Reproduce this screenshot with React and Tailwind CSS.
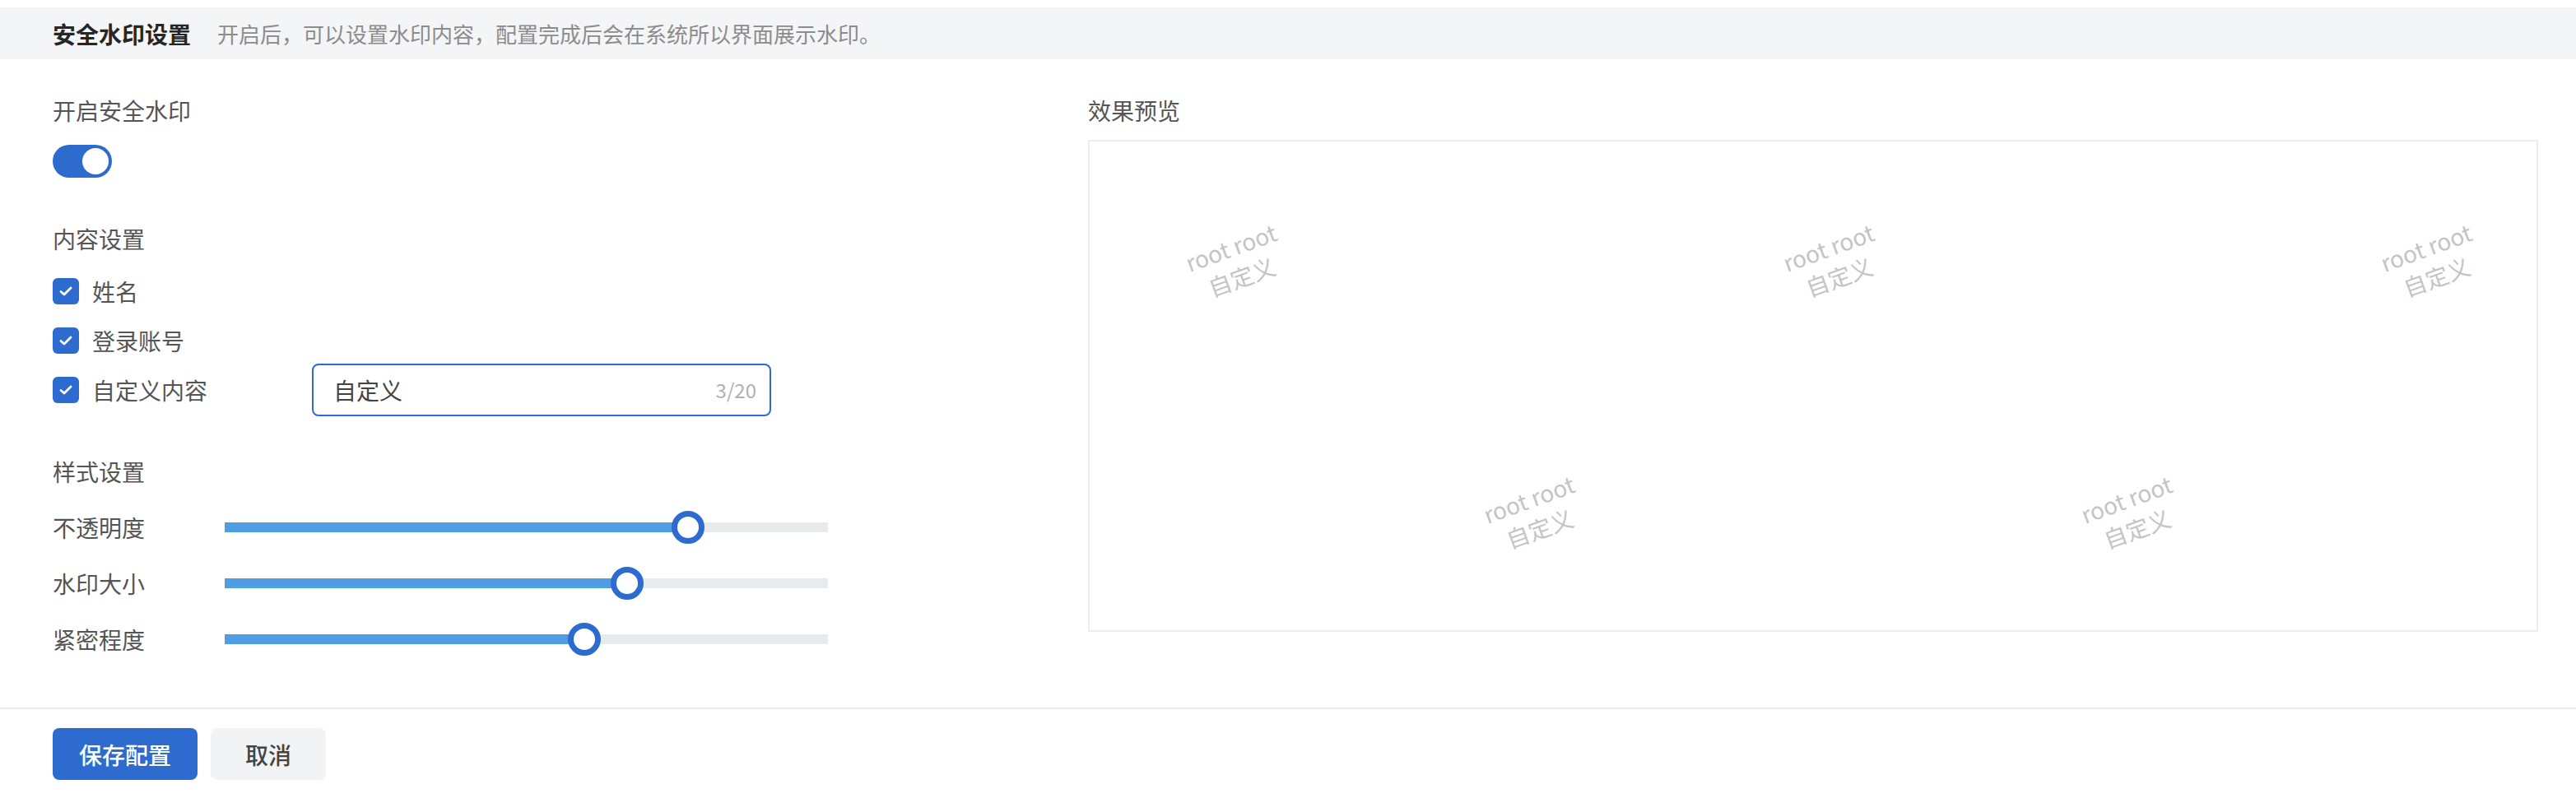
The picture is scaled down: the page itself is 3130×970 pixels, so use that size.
import { useState } from 'react';

const FONT = {
  fontFamily: '"PingFang SC", "Noto Sans CJK SC", "Noto Sans", sans-serif',
};

const sliders = [
  { label: '不透明度', fill: 563 },
  { label: '水印大小', fill: 489 },
  { label: '紧密程度', fill: 437 },
];

const marks = [
  { left: 178, top: 146 },
  { left: 904, top: 146 },
  { left: 1630, top: 146 },
  { left: 540, top: 452 },
  { left: 1266, top: 452 },
];

const CheckBox = () => (
  <span className="w-8 h-8 rounded-[6px] bg-[#2d6cce] flex items-center justify-center shrink-0">
    <svg width="16" height="12" viewBox="0 0 16 12" fill="none">
      <polyline
        points="2,6.5 6,10 14,2"
        stroke="#fff"
        strokeWidth="2.8"
        strokeLinecap="round"
        strokeLinejoin="round"
      />
    </svg>
  </span>
);

const App = () => {
  const [custom, setCustom] = useState('自定义');

  return (
    <div className="w-full h-[970px] bg-white flex flex-col" style={FONT}>
      {/* Header */}
      <div className="mt-[9px] h-[63px] bg-[#f4f5f7] flex items-center px-16 shrink-0">
        <span className="text-[28px] font-semibold text-[#262626]">安全水印设置</span>
        <span className="ml-8 text-[26px] text-[#8c8c8c]">
          开启后，可以设置水印内容，配置完成后会在系统所以界面展示水印。
        </span>
      </div>

      {/* Body */}
      <div className="h-[788px] flex pl-16 pr-[46px] shrink-0">
        {/* Settings column */}
        <div className="w-[1258px] shrink-0 pt-[42px] flex flex-col">
          <div className="text-[28px] leading-[40px] text-[#555]">开启安全水印</div>
          <div className="mt-[22px] w-[72px] h-10 rounded-full bg-[#2d6cce] flex items-center justify-end pr-1">
            <span className="w-8 h-8 rounded-full bg-white" />
          </div>

          <div className="mt-[54px] text-[28px] leading-[40px] text-[#555]">内容设置</div>
          <div className="mt-6 flex flex-col gap-5">
            <div className="h-10 flex items-center gap-4">
              <CheckBox />
              <span className="text-[28px] text-[#555]">姓名</span>
            </div>
            <div className="h-10 flex items-center gap-4">
              <CheckBox />
              <span className="text-[28px] text-[#555]">登录账号</span>
            </div>
            <div className="h-10 flex items-center">
              <div className="w-[315px] shrink-0 flex items-center gap-4">
                <CheckBox />
                <span className="text-[28px] text-[#555]">自定义内容</span>
              </div>
              <div className="w-[558px] h-16 shrink-0 border-2 border-[#2d6cce] rounded-[8px] flex items-center pl-6 pr-4">
                <input
                  value={custom}
                  onChange={(e) => setCustom(e.target.value.slice(0, 20))}
                  className="flex-1 min-w-0 outline-none bg-transparent text-[28px] text-[#444]"
                  style={FONT}
                />
                <span className="text-[24px] text-[#b0b0b0]">{custom.length}/20</span>
              </div>
            </div>
          </div>

          <div className="mt-[59px] text-[28px] leading-[40px] text-[#555]">样式设置</div>
          <div className="mt-7 flex flex-col gap-7">
            {sliders.map((s) => (
              <div key={s.label} className="h-10 flex items-center">
                <span className="w-[209px] shrink-0 text-[28px] text-[#555]">{s.label}</span>
                <div className="relative w-[733px] h-3 bg-[#e8ebee]">
                  <div className="h-3 bg-[#4f9ee3]" style={{ width: s.fill }} />
                  <span
                    className="absolute top-1/2 w-10 h-10 -translate-x-1/2 -translate-y-1/2 rounded-full bg-white border-[7px] border-[#2d6cce]"
                    style={{ left: s.fill }}
                  />
                </div>
              </div>
            ))}
          </div>
        </div>

        {/* Preview column */}
        <div className="flex-1 pt-[42px] flex flex-col">
          <div className="text-[28px] leading-[40px] text-[#555]">效果预览</div>
          <div className="relative mt-4 h-[598px] border-2 border-[#ebedf0] overflow-hidden">
            {marks.map((m, i) => (
              <div
                key={i}
                className="absolute -translate-x-1/2 -translate-y-1/2 -rotate-20 flex flex-col items-center text-[28px] leading-[38px] text-[#c4c4c4] whitespace-nowrap"
                style={{ left: m.left, top: m.top }}
              >
                <span>root root</span>
                <span>自定义</span>
              </div>
            ))}
          </div>
        </div>
      </div>

      {/* Footer */}
      <div className="border-t-2 border-[#ececec] flex items-start gap-4 px-16 pt-[23px] flex-1">
        <button className="w-[176px] h-[63px] rounded-[8px] bg-[#2d6cce] text-white text-[28px] font-medium">
          保存配置
        </button>
        <button className="w-[140px] h-[63px] rounded-[8px] bg-[#f2f3f5] text-[#444] text-[28px] font-medium">
          取消
        </button>
      </div>
    </div>
  );
};

export default App;
